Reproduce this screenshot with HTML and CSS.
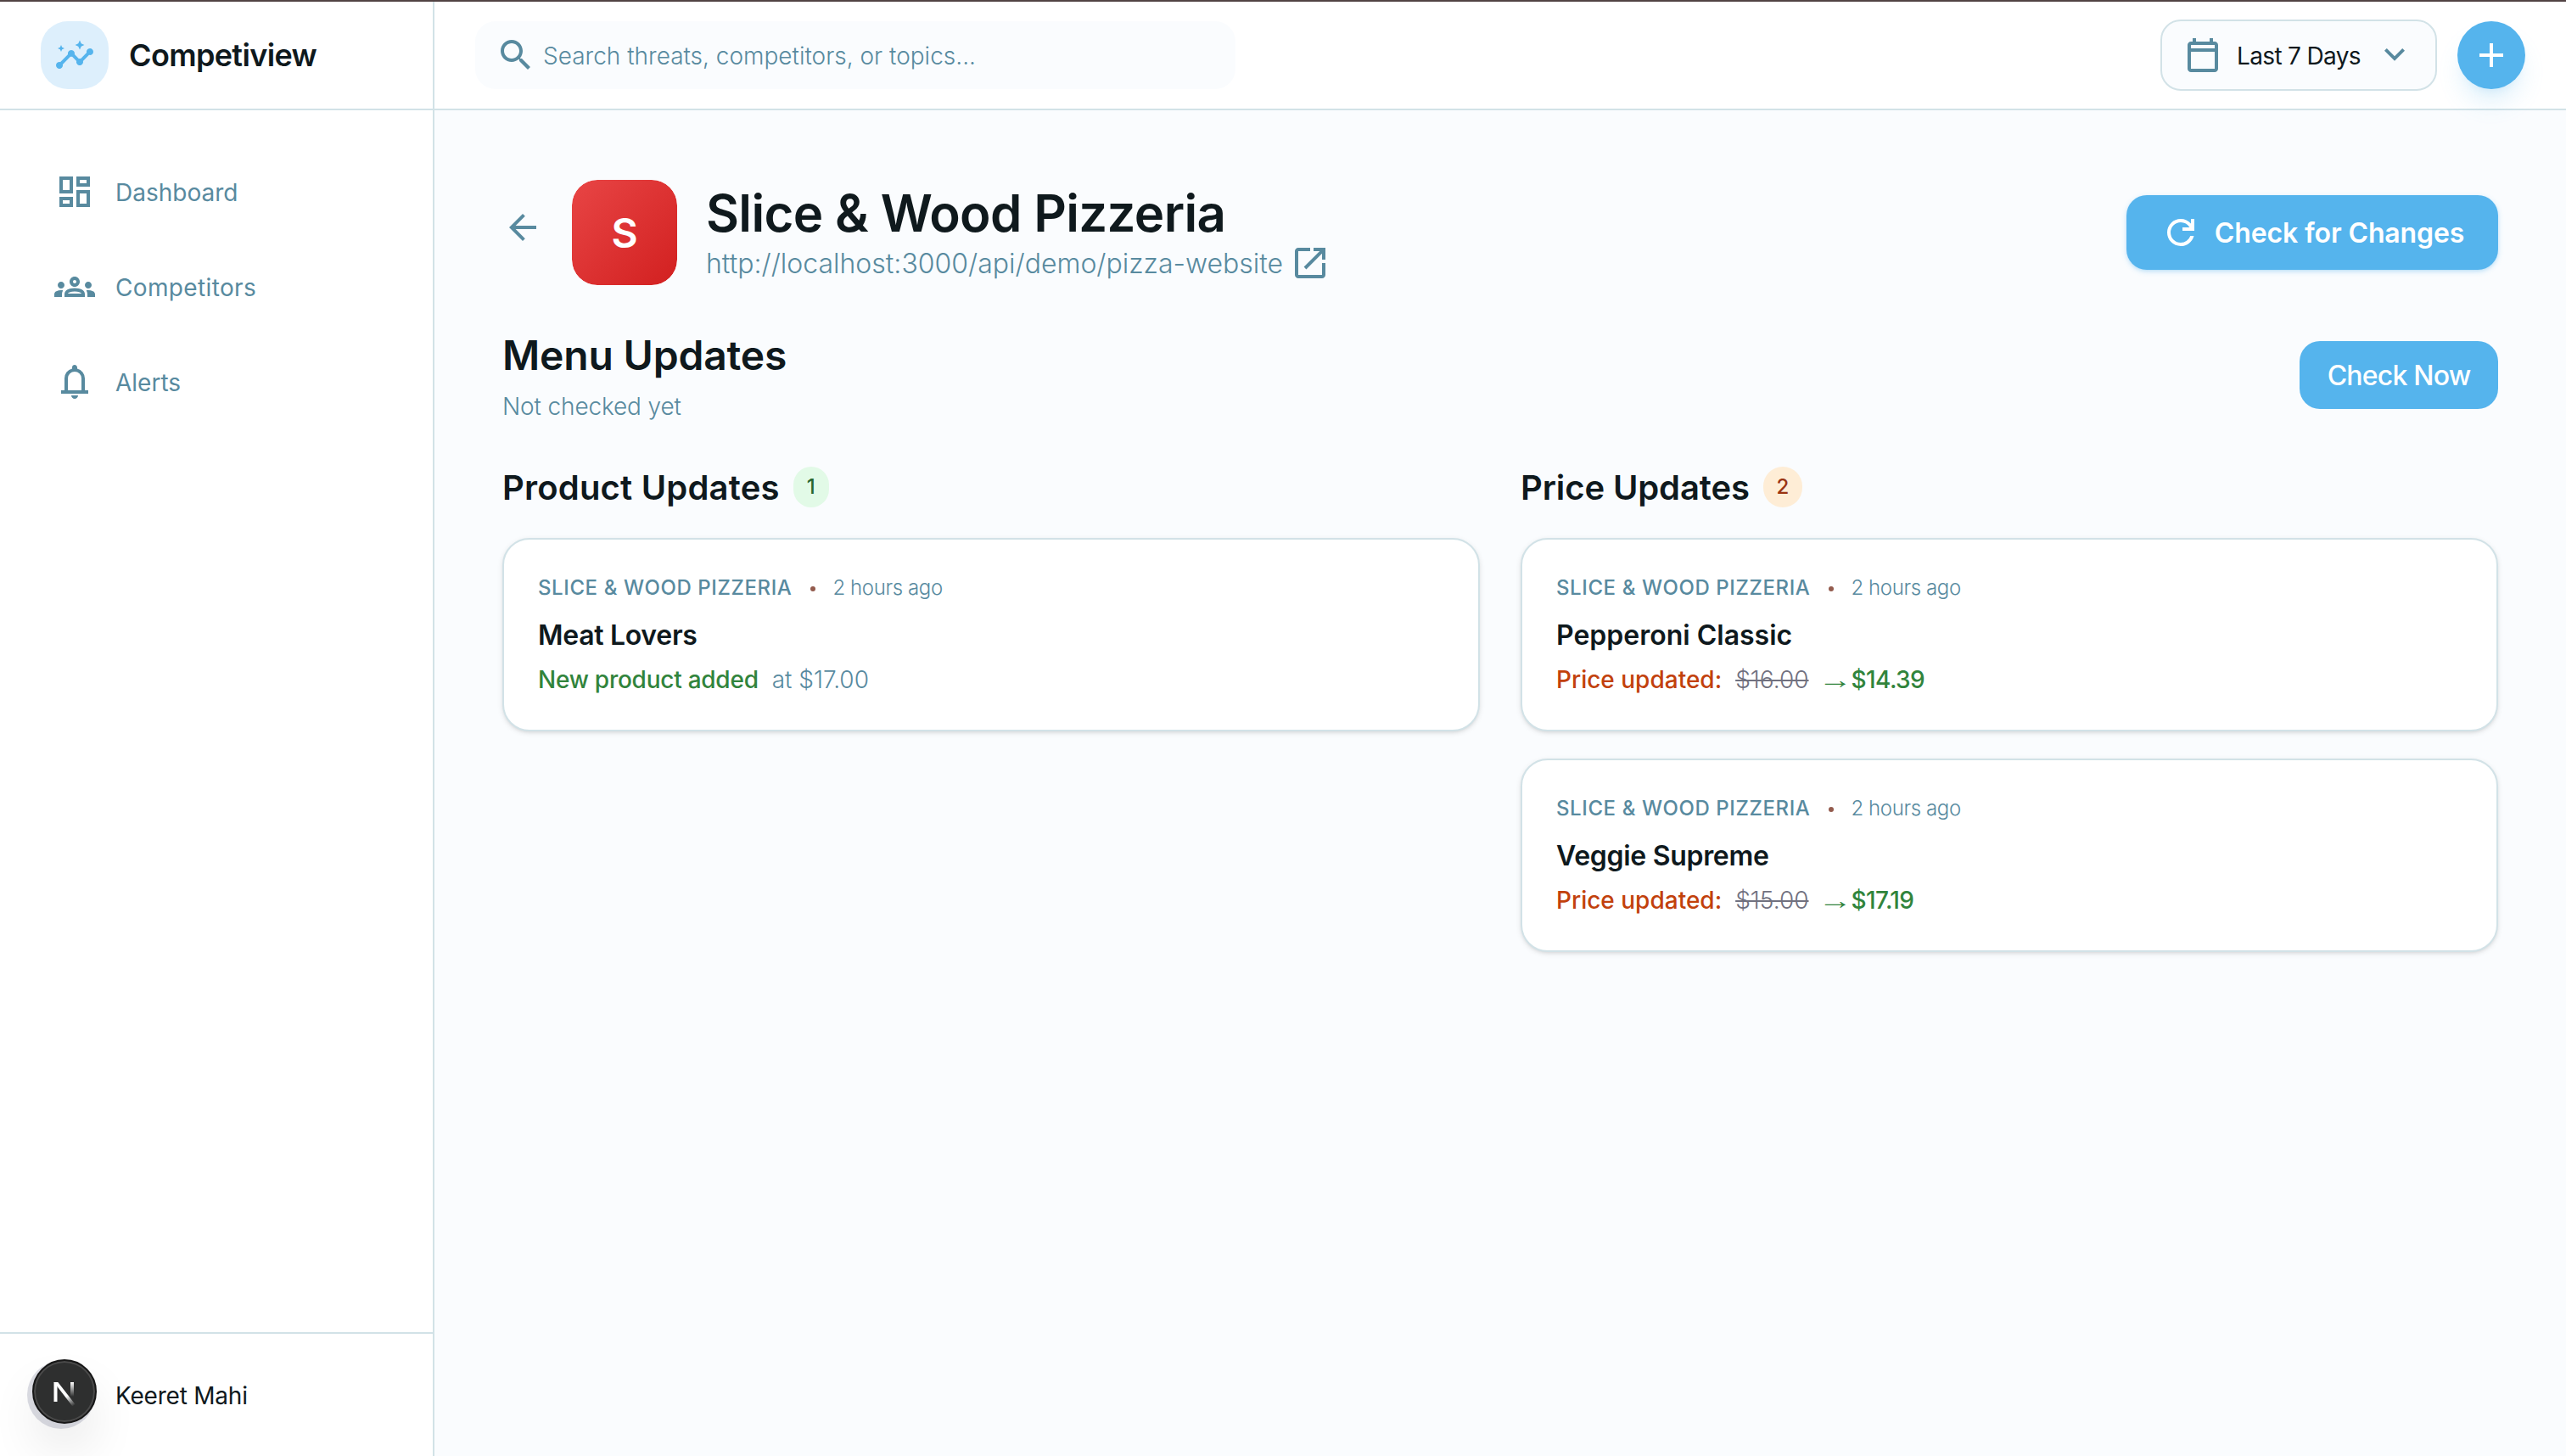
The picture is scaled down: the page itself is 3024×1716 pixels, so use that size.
FILE: index.html
```html
<!DOCTYPE html>
<html lang="en">
<head>
    <meta charset="UTF-8">
    <meta name="viewport" content="width=device-width, initial-scale=1.0">
    <title>Competiview</title>
    <link rel="stylesheet" href="styles.css">
</head>
<body>

    <aside class="sidebar">
        <div class="brand">
            <div class="brand-logo">
                <svg class="icon" viewBox="0 0 24 24"><path d="M21 8c-1.45 0-2.26 1.44-1.93 2.51l-3.55 3.56c-.3-.09-.74-.09-1.04 0l-2.55-2.55C12.27 10.45 11.46 9 10 9c-1.45 0-2.27 1.44-1.93 2.52l-4.56 4.55C2.44 15.74 1 16.55 1 18c0 1.1.9 2 2 2 1.45 0 2.26-1.44 1.93-2.51l4.55-4.56c.3.09.74.09 1.04 0l2.55 2.55C12.73 16.55 13.54 18 15 18c1.45 0 2.27-1.44 1.93-2.52l3.56-3.55c1.07.33 2.51-.48 2.51-1.93 0-1.1-.9-2-2-2zM15 8.7l-.85-1.85L12.3 6l1.85-.85L15 3.3l.85 1.85L17.7 6l-1.85.85zM4 10l-.6-1.4L2 8l1.4-.6L4 6l.6 1.4L6 8l-1.4.6z"/></svg>
            </div>
            <span class="brand-name">Competiview</span>
        </div>

        <nav class="nav">
            <a class="nav-item">
                <svg class="icon" viewBox="0 0 24 24"><path d="M19 5v2h-4V5h4M9 5v6H5V5h4m10 8v6h-4v-6h4M9 17v2H5v-2h4M21 3h-8v6h8V3zM11 3H3v10h8V3zm10 8h-8v10h8V11zm-10 4H3v6h8v-6z"/></svg>
                <span>Dashboard</span>
            </a>
            <a class="nav-item nav-competitors">
                <svg class="icon" viewBox="0 0 24 24"><path d="M4 13c1.1 0 2-.9 2-2s-.9-2-2-2-2 .9-2 2 .9 2 2 2zm1.13 1.1C4.76 14.04 4.39 14 4 14c-.99 0-1.93.21-2.78.58C.48 14.9 0 15.62 0 16.43V18h4.5v-1.61c0-.83.23-1.61.63-2.29zM20 13c1.1 0 2-.9 2-2s-.9-2-2-2-2 .9-2 2 .9 2 2 2zm4 3.43c0-.81-.48-1.53-1.22-1.85C21.93 14.21 20.99 14 20 14c-.39 0-.76.04-1.13.1.4.68.63 1.46.63 2.29V18H24v-1.57zm-7.76-2.78c-1.17-.52-2.61-.9-4.24-.9s-3.07.39-4.24.9C6.68 14.13 6 15.21 6 16.39V18h12v-1.61c0-1.18-.68-2.26-1.76-2.74zM8.07 16c.09-.23.13-.39.91-.69.97-.38 1.99-.56 3.02-.56s2.05.18 3.02.56c.77.3.81.46.91.69H8.07zM12 8c.55 0 1 .45 1 1s-.45 1-1 1-1-.45-1-1 .45-1 1-1m0-2c-1.66 0-3 1.34-3 3s1.34 3 3 3 3-1.34 3-3-1.34-3-3-3z"/></svg>
                <span>Competitors</span>
            </a>
            <a class="nav-item">
                <svg class="icon" viewBox="0 0 24 24"><path d="M4 19v-2h2v-7q0-2.075 1.250-3.688T10.500 4.200v-.7q0-.625.438-1.063T12 2t1.063.438T13.500 3.500v.7q2 .5 3.250 2.113T18 10v7h2v2zm8 3q-.825 0-1.413-.588T10 20h4q0 .825-.588 1.413T12 22m-4-5h8v-7q0-1.650-1.175-2.825T12 6 9.175 7.175 8 10z"/></svg>
                <span>Alerts</span>
            </a>
        </nav>

        <div class="user">
            <div class="avatar"></div>
            <span class="user-name">Keeret Mahi</span>
        </div>
    </aside>

    <div class="page">
        <header class="topbar">
            <div class="search">
                <svg class="icon" viewBox="0 0 24 24"><path d="M15.5 14h-.79l-.28-.27C15.41 12.59 16 11.11 16 9.500 16 5.910 13.090 3 9.500 3S3 5.910 3 9.500 5.910 16 9.500 16c1.610 0 3.090-.59 4.230-1.570l.27.28v.79l5 4.990L20.490 19l-4.990-5zm-6 0C7.010 14 5 11.990 5 9.500S7.010 5 9.500 5 14 7.010 14 9.500 11.990 14 9.500 14z"/></svg>
                <span>Search threats, competitors, or topics...</span>
            </div>
            <div class="topbar-actions">
                <div class="range">
                    <svg class="icon" viewBox="0 0 24 24"><path d="M5 22q-.825 0-1.413-.588T3 20V6q0-.825.588-1.413T5 4h1V2h2v2h8V2h2v2h1q.825 0 1.413.588T21 6v14q0 .825-.588 1.413T19 22zm0-2h14V10H5zM5 8h14V6H5z"/></svg>
                    <span class="range-label">Last 7 Days</span>
                    <svg class="icon" viewBox="0 0 24 24"><path d="M12 15.400l-6-6L7.400 8l4.600 4.600L16.600 8 18 9.400z"/></svg>
                </div>
                <button class="add-btn">
                    <svg class="icon" viewBox="0 0 24 24"><path d="M19 13h-6v6h-2v-6H5v-2h6V5h2v6h6z"/></svg>
                </button>
            </div>
        </header>

        <main class="content">
            <div class="profile">
                <a class="back">
                    <svg class="icon" viewBox="0 0 24 24"><path d="M7.825 13l5.600 5.600L12 20l-8-8 8-8 1.425 1.400-5.600 5.600H20v2z"/></svg>
                </a>
                <div class="profile-logo">S</div>
                <div class="profile-info">
                    <h1>Slice &amp; Wood Pizzeria</h1>
                    <a class="profile-url">
                        <span>http://localhost:3000/api/demo/pizza-website</span>
                        <svg class="icon" viewBox="0 0 24 24"><path d="M5 21q-.825 0-1.413-.588T3 19V5q0-.825.588-1.413T5 3h7v2H5v14h14v-7h2v7q0 .825-.588 1.413T19 21zm4.700-5.300l-1.400-1.400L17.600 5H14V3h7v7h-2V6.400z"/></svg>
                    </a>
                </div>
                <button class="btn btn-changes">
                    <svg class="icon" viewBox="0 0 24 24"><path d="M12 20q-3.350 0-5.675-2.325T4 12t2.325-5.675T12 4q1.725 0 3.300.713T18 6.750V4h2v7h-7V9h4.200q-.8-1.400-2.188-2.200T12 6Q9.500 6 7.750 7.750T6 12t1.750 4.250T12 18q1.925 0 3.475-1.100T17.650 14h2.100q-.7 2.650-2.850 4.325T12 20"/></svg>
                    <span>Check for Changes</span>
                </button>
            </div>

            <div class="menu-head">
                <div>
                    <h2>Menu Updates</h2>
                    <p>Not checked yet</p>
                </div>
                <button class="btn btn-now"><span>Check Now</span></button>
            </div>

            <div class="columns">
                <section>
                    <div class="column-head">
                        <h3 class="product-title">Product Updates</h3>
                        <span class="badge badge-green">1</span>
                    </div>
                    <div class="card">
                        <div class="card-meta">
                            <span class="card-source">Slice &amp; Wood Pizzeria</span>
                            <span class="dot"></span>
                            <span class="card-time">2 hours ago</span>
                        </div>
                        <h4 class="tight">Meat Lovers</h4>
                        <div class="card-change">
                            <span class="added">New product added</span>
                            <span class="at-price">at $17.00</span>
                        </div>
                    </div>
                </section>

                <section>
                    <div class="column-head">
                        <h3>Price Updates</h3>
                        <span class="badge badge-orange">2</span>
                    </div>
                    <div class="card">
                        <div class="card-meta">
                            <span class="card-source">Slice &amp; Wood Pizzeria</span>
                            <span class="dot"></span>
                            <span class="card-time">2 hours ago</span>
                        </div>
                        <h4>Pepperoni Classic</h4>
                        <div class="card-change">
                            <span class="updated">Price updated:</span>
                            <span class="old-price">$16.00</span>
                            <span class="new-price"><span class="arrow">→</span>$14.39</span>
                        </div>
                    </div>
                    <div class="card">
                        <div class="card-meta">
                            <span class="card-source">Slice &amp; Wood Pizzeria</span>
                            <span class="dot"></span>
                            <span class="card-time">2 hours ago</span>
                        </div>
                        <h4 class="tight">Veggie Supreme</h4>
                        <div class="card-change">
                            <span class="updated">Price updated:</span>
                            <span class="old-price">$15.00</span>
                            <span class="new-price"><span class="arrow">→</span>$17.19</span>
                        </div>
                    </div>
                </section>
            </div>
        </main>
    </div>

    <!-- Dev tools badge -->
    <div class="dev-badge">
        <svg viewBox="0 0 76 76">
            <defs>
                <linearGradient id="fadeDiag" gradientUnits="userSpaceOnUse" x1="41" y1="43" x2="49" y2="55">
                    <stop offset="0" stop-color="#fff"/>
                    <stop offset="1" stop-color="#fff" stop-opacity="0"/>
                </linearGradient>
                <linearGradient id="fadeBar" gradientUnits="userSpaceOnUse" x1="47" y1="27" x2="47" y2="44">
                    <stop offset="0" stop-color="#fff"/>
                    <stop offset="1" stop-color="#fff" stop-opacity="0"/>
                </linearGradient>
            </defs>
            <rect x="25.500" y="27" width="4" height="23" fill="#fff"/>
            <path d="M25.500 27h4.800L50.500 53l-3 2.500z" fill="url(#fadeDiag)"/>
            <rect x="45" y="27" width="4" height="17" fill="url(#fadeBar)"/>
        </svg>
    </div>

</body>
</html>
```
FILE: styles.css
```css
* {
    box-sizing: border-box;
    margin: 0;
    padding: 0;
}

body {
    display: flex;
    height: 100vh;
    overflow: hidden;
    border-top: 2px solid #524344;
    background: #fafcfe;
    color: #0f191d;
    font-family: Inter, "Liberation Sans", sans-serif;
    font-size: 28px;
    line-height: 40px;
}

.icon {
    display: block;
    flex: none;
    width: 48px;
    height: 48px;
    fill: currentColor;
}

button {
    border: none;
    font-family: inherit;
    cursor: pointer;
}

/* Optical centering of labels next to icons */
.nav-item span,
.search span,
.range-label,
.user-name,
.profile-url span,
.btn span {
    padding-top: 2px;
}

/* Sidebar */
.sidebar {
    display: flex;
    flex-direction: column;
    flex: none;
    width: 512px;
    background: #fff;
    border-right: 2px solid #d2e2e7;
}

.brand {
    display: flex;
    align-items: center;
    gap: 24px;
    height: 128px;
    padding: 0 48px;
    border-bottom: 2px solid #d2e2e7;
}

.brand-logo {
    display: flex;
    align-items: center;
    justify-content: center;
    width: 80px;
    height: 80px;
    border-radius: 32px;
    background: #ddeffc;
    color: #55b4ed;
}

.brand-name {
    font-size: 36px;
    font-weight: 600;
    letter-spacing: -0.65px;
}

.nav {
    display: flex;
    flex-direction: column;
    flex: 1;
    gap: 16px;
    padding: 48px 32px;
}

.nav-item {
    display: flex;
    align-items: center;
    gap: 24px;
    height: 96px;
    padding: 0 32px;
    color: #588a9f;
}

.nav-competitors {
    letter-spacing: 0.36px;
}

.user {
    display: flex;
    align-items: center;
    gap: 24px;
    padding: 32px;
    border-top: 2px solid #d2e2e7;
}

.avatar {
    width: 80px;
    height: 80px;
    border-radius: 50%;
    background: #dcdde4;
}

.user-name {
    letter-spacing: -0.22px;
}

/* Top bar */
.page {
    flex: 1;
}

.topbar {
    display: flex;
    align-items: center;
    justify-content: space-between;
    height: 128px;
    padding: 0 48px;
    background: #fff;
    border-bottom: 2px solid #d2e2e7;
}

.search {
    display: flex;
    align-items: center;
    gap: 8px;
    width: 896px;
    height: 80px;
    padding: 0 24px;
    border-radius: 24px;
    background: #fafcfe;
    color: #588a9f;
    font-weight: 300;
}

.topbar-actions {
    display: flex;
    align-items: center;
    gap: 24px;
}

.range {
    display: flex;
    align-items: center;
    width: 326px;
    height: 84px;
    padding: 0 24px;
    border: 2px solid #d2e2e7;
    border-radius: 24px;
    background: #fafcfe;
    color: #588a9f;
}

.range-label {
    flex: 1;
    padding-left: 16px;
    color: #0f191d;
    letter-spacing: -0.65px;
    white-space: nowrap;
}

.add-btn {
    display: flex;
    align-items: center;
    justify-content: center;
    width: 80px;
    height: 80px;
    border-radius: 50%;
    background: #55b4ed;
    color: #fff;
    box-shadow: 0 20px 30px -6px rgba(85, 180, 237, 0.2), 0 8px 12px -8px rgba(85, 180, 237, 0.2);
}

/* Content */
.content {
    padding: 80px;
}

.profile {
    display: flex;
    align-items: center;
    height: 128px;
    margin-bottom: 48px;
}

.back {
    margin: 0 32px 12px 0;
    color: #588a9f;
}

.profile-logo {
    display: flex;
    align-items: center;
    justify-content: center;
    width: 128px;
    height: 128px;
    margin-right: 32px;
    padding-top: 2px;
    border: 2px solid #fafcfe;
    border-radius: 32px;
    background: linear-gradient(135deg, #e84545, #d22020) padding-box;
    color: #fff;
    font-size: 48px;
    font-weight: 600;
}

.profile-info {
    flex: 1;
}

h1 {
    margin-bottom: -2px;
    font-size: 60px;
    font-weight: 600;
    letter-spacing: -0.65px;
    line-height: 74px;
}

.profile-url {
    display: flex;
    align-items: center;
    gap: 8px;
    height: 48px;
    color: #588a9f;
    font-size: 32px;
    font-weight: 300;
}

.btn {
    display: flex;
    align-items: center;
    justify-content: center;
    border-radius: 24px;
    background: #55b4ed;
    color: #fff;
    font-size: 32px;
    line-height: 48px;
    white-space: nowrap;
}

.btn-changes {
    gap: 16px;
    width: 438px;
    height: 88px;
    font-weight: 600;
    letter-spacing: -0.13px;
    box-shadow: 0 2px 6px rgba(85, 180, 237, 0.3), 0 2px 4px -2px rgba(85, 180, 237, 0.3);
}

.btn-now {
    width: 234px;
    height: 80px;
    font-weight: 500;
    letter-spacing: -0.8px;
}

.menu-head {
    display: flex;
    align-items: center;
    justify-content: space-between;
    height: 112px;
    margin-bottom: 48px;
}

h2 {
    margin: 2px 0 8px;
    font-size: 48px;
    font-weight: 600;
    letter-spacing: -0.2px;
    line-height: 64px;
}

.menu-head p {
    color: #588a9f;
    font-weight: 300;
    letter-spacing: -0.14px;
}

.columns {
    display: grid;
    grid-template-columns: 1fr 1fr;
    gap: 48px;
}

.column-head {
    display: flex;
    align-items: center;
    gap: 16px;
    height: 56px;
    margin-bottom: 32px;
}

h3 {
    padding-top: 2px;
    font-size: 40px;
    font-weight: 600;
    letter-spacing: -0.11px;
    line-height: 56px;
}

.product-title {
    letter-spacing: 0.19px;
}

.badge {
    display: flex;
    align-items: center;
    justify-content: center;
    height: 48px;
    border-radius: 24px;
    font-size: 24px;
    font-weight: 500;
}

.badge-green {
    width: 42px;
    background: #e2fae7;
    color: #29672f;
}

.badge-orange {
    width: 46px;
    background: #feedd6;
    color: #9a3412;
}

/* Update cards */
.card {
    padding: 41px 40px 39px;
    border: 2px solid #d2e2e7;
    border-radius: 32px;
    background: #fff;
    box-shadow: 0 2px 6px rgba(0, 0, 0, 0.1), 0 2px 4px -2px rgba(0, 0, 0, 0.1);
}

.card + .card {
    margin-top: 32px;
}

.card-meta {
    display: flex;
    align-items: center;
    margin-bottom: 16px;
    color: #588a9f;
    font-size: 24px;
    line-height: 32px;
}

.card-source {
    font-weight: 500;
    letter-spacing: 0.6px;
    text-transform: uppercase;
}

.dot {
    width: 6px;
    height: 6px;
    margin: 1px 20px 0 22px;
    border-radius: 50%;
    background: #935b4d;
}

.card-time {
    font-weight: 300;
    letter-spacing: -0.39px;
}

h4 {
    margin-bottom: 8px;
    font-size: 32px;
    font-weight: 600;
    line-height: 48px;
}

.tight {
    letter-spacing: -0.3px;
}

.card-change {
    display: flex;
    gap: 16px;
    height: 40px;
}

.added {
    color: #31843c;
    font-weight: 500;
    letter-spacing: -0.25px;
}

.at-price {
    color: #588a9f;
    font-weight: 300;
}

.updated {
    color: #c2410c;
    font-weight: 500;
}

.old-price {
    color: #71717f;
    font-weight: 300;
    text-decoration: line-through;
}

.new-price {
    color: #31843c;
    font-weight: 500;
    letter-spacing: -0.6px;
}

.arrow {
    display: inline-block;
    width: 28px;
    margin-right: 6px;
    font-family: "Liberation Sans", sans-serif;
    line-height: 1;
    text-align: center;
    transform: scaleX(1.45);
}

/* Floating badge over the avatar */
.dev-badge {
    position: fixed;
    left: 38px;
    bottom: 38px;
    width: 76px;
    height: 76px;
    border: 2px solid #171717;
    border-radius: 50%;
    background: #2e2f2f;
    box-shadow: inset 0 0 0 2px #4a4a4a, 0 32px 64px -16px rgba(0, 0, 0, 0.24);
}

.dev-badge svg {
    display: block;
    width: 76px;
    height: 76px;
    margin: -2px;
}
```
